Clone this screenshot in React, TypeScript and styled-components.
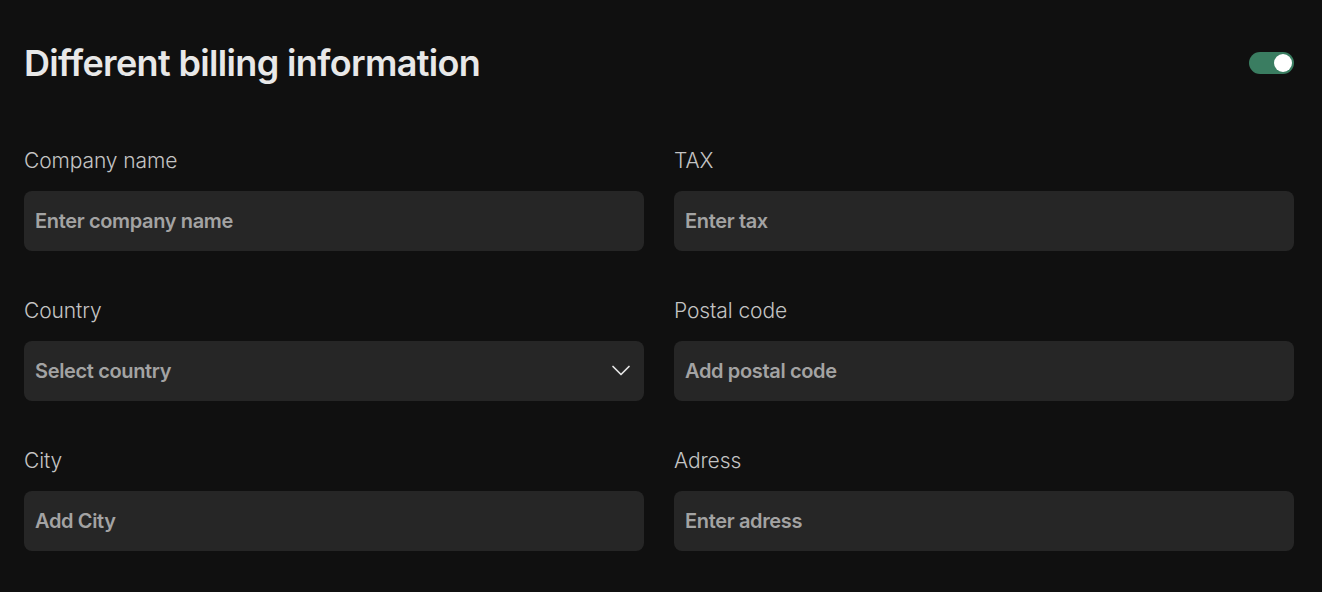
import styled, { createGlobalStyle } from 'styled-components';

const GlobalStyle = createGlobalStyle`
  html, body {
    margin: 0;
    padding: 0;
    background: #101010;
  }
  body {
    font-family: Inter, "Noto Sans", sans-serif;
    color: #e6e6e6;
  }
`;

const fields = [
  { label: 'Company name', placeholder: 'Enter company name' },
  { label: 'TAX', placeholder: 'Enter tax' },
  { label: 'Country', placeholder: 'Select country', select: true },
  { label: 'Postal code', placeholder: 'Add postal code' },
  { label: 'City', placeholder: 'Add City' },
  { label: 'Adress', placeholder: 'Enter adress' },
];

const ChevronDown = () => (
  <svg width="20" height="12" viewBox="0 0 20 12" fill="none" stroke="#e6e6e6" strokeWidth="1.7" strokeLinecap="round" strokeLinejoin="round">
    <path d="M2 1.5 L10 9.5 L18 1.5" />
  </svg>
);

const App = (): JSX.Element => {
  return (
    <Page>
      <GlobalStyle />
      <Header>
        <Title>Different billing information</Title>
        <Toggle type="button" aria-pressed="true">
          <Knob />
        </Toggle>
      </Header>
      <Grid>
        {fields.map((f) => (
          <Field key={f.label}>
            <Label>{f.label}</Label>
            <InputBox>
              <Placeholder>{f.placeholder}</Placeholder>
              {f.select && <ChevronDown />}
            </InputBox>
          </Field>
        ))}
      </Grid>
    </Page>
  );
};

export default App;

const Page = styled.main`
  width: 1322px;
  height: 592px;
  box-sizing: border-box;
  padding: 24px 28px 0 24px;
  background: #101010;
`;

const Header = styled.header`
  height: 78px;
  display: flex;
  align-items: center;
  justify-content: space-between;
`;

const Title = styled.h1`
  margin: 0;
  font-size: 36px;
  font-weight: 600;
  letter-spacing: -0.65px;
  color: #e8e8e8;
`;

const Toggle = styled.button`
  width: 45px;
  height: 22px;
  padding: 2px;
  border: none;
  border-radius: 11px;
  background: #3a7d61;
  display: flex;
  align-items: center;
  justify-content: flex-end;
  cursor: pointer;
`;

const Knob = styled.span`
  width: 18px;
  height: 18px;
  border-radius: 50%;
  background: #ffffff;
`;

const Grid = styled.div`
  margin-top: 46px;
  display: grid;
  grid-template-columns: 620px 620px;
  column-gap: 30px;
  row-gap: 47px;
`;

const Field = styled.div`
  display: flex;
  flex-direction: column;
  gap: 17px;
`;

const Label = styled.label`
  font-size: 21px;
  line-height: 26px;
  font-weight: 300;
  color: #c4c4c4;
  letter-spacing: -0.1px;
`;

const InputBox = styled.div`
  height: 60px;
  box-sizing: border-box;
  padding: 0 13px 0 11px;
  border-radius: 8px;
  background: #262626;
  display: flex;
  align-items: center;
  justify-content: space-between;
`;

const Placeholder = styled.span`
  font-size: 20px;
  font-weight: 600;
  color: #a3a3a3;
  letter-spacing: -0.35px;
`;
